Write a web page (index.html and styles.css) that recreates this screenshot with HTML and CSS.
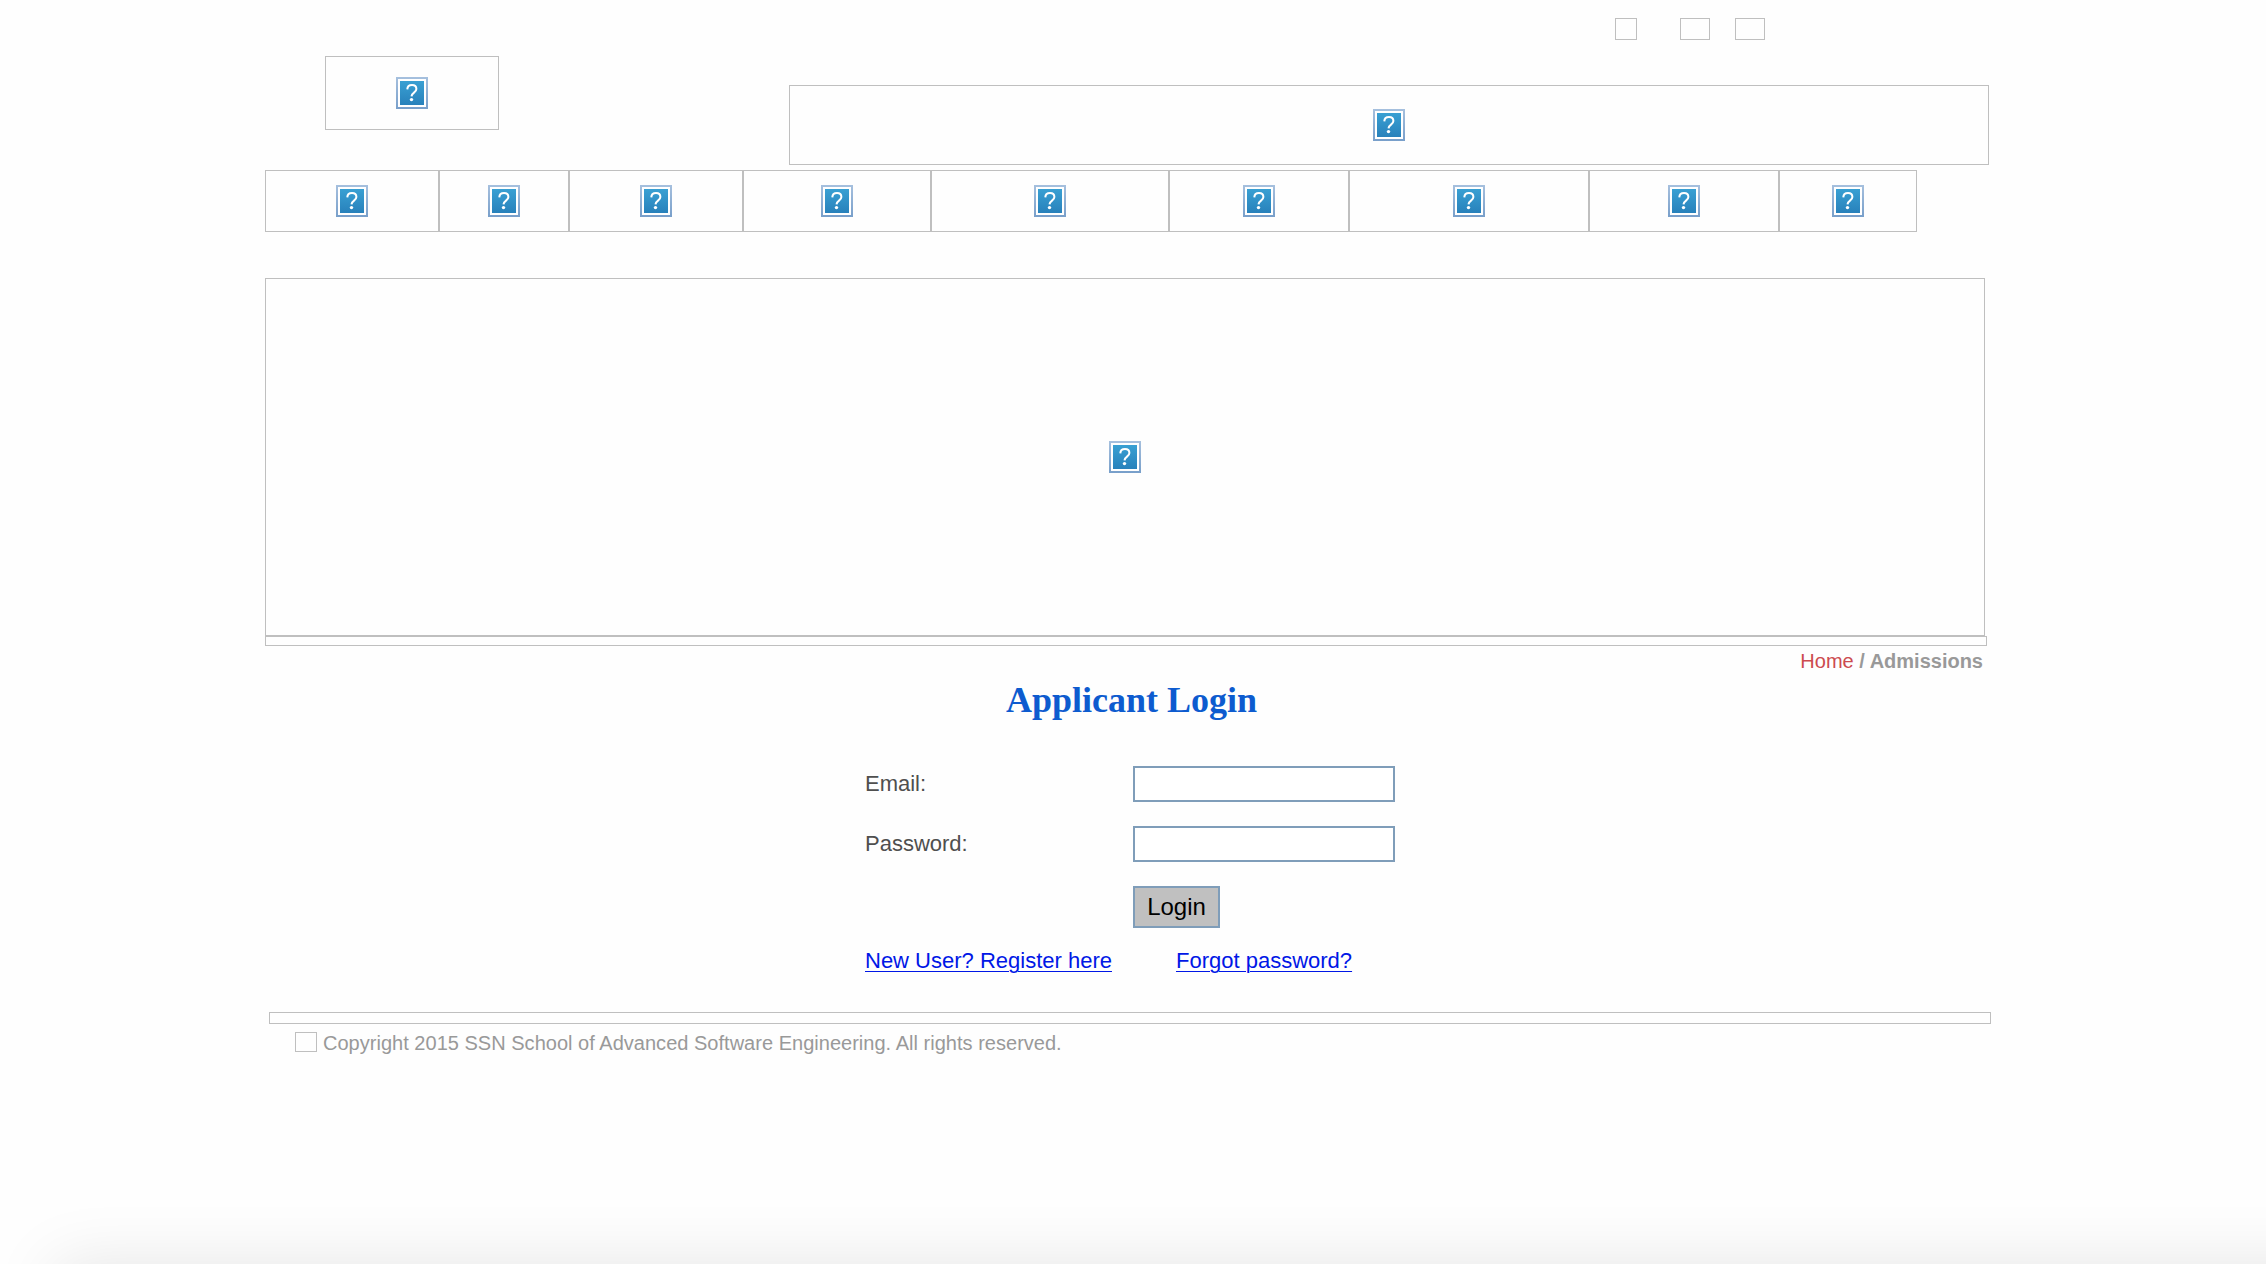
FILE: index.html
```
<!DOCTYPE html>
<html lang="en">
<head>
<meta charset="utf-8">
<title>Applicant Login</title>
<link rel="stylesheet" href="styles.css">
</head>
<body>
<svg class="defs" width="0" height="0" aria-hidden="true">
  <defs>
    <linearGradient id="frame" x1="0" y1="0" x2="0" y2="1"><stop offset="0" stop-color="#a6c0de"/><stop offset="1" stop-color="#789fca"/></linearGradient>
    <linearGradient id="fill" x1="0" y1="0" x2="0" y2="1"><stop offset="0" stop-color="#39a0d3"/><stop offset="1" stop-color="#2881bb"/></linearGradient>
    <symbol id="missing" viewBox="0 0 32 32">
      <rect width="32" height="32" fill="url(#frame)"/>
      <rect x="2" y="2" width="28" height="28" fill="#fff"/>
      <rect x="4" y="4" width="24" height="24" fill="url(#fill)"/>
      <path d="M11.3 12.4C11.4 9.6 13.2 8 16 8C18.8 8 20.4 9.7 20.4 12C20.4 15.6 15.6 15.6 15.5 19.4" fill="none" stroke="#fff" stroke-width="2"/>
      <circle cx="15.5" cy="22.6" r="1.7" fill="#fff"/>
    </symbol>
  </defs>
</svg>
<header class="header">
  <div class="box logo"><svg class="icon"><use href="#missing"/></svg></div>
  <div class="head-right">
    <div class="social">
      <span class="box small"></span>
      <span class="box wide"></span>
      <span class="box wide last"></span>
    </div>
    <div class="box banner"><svg class="icon"><use href="#missing"/></svg></div>
  </div>
</header>
<nav class="nav">
  <a class="box about"><svg class="icon"><use href="#missing"/></svg></a>
  <a class="box faculty"><svg class="icon"><use href="#missing"/></svg></a>
  <a class="box about"><svg class="icon"><use href="#missing"/></svg></a>
  <a class="box courses"><svg class="icon"><use href="#missing"/></svg></a>
  <a class="box admissions"><svg class="icon"><use href="#missing"/></svg></a>
  <a class="box campus"><svg class="icon"><use href="#missing"/></svg></a>
  <a class="box placements"><svg class="icon"><use href="#missing"/></svg></a>
  <a class="box alumni"><svg class="icon"><use href="#missing"/></svg></a>
  <a class="box contact"><svg class="icon"><use href="#missing"/></svg></a>
</nav>
<div class="box hero"><svg class="icon"><use href="#missing"/></svg></div>
<div class="box strip"></div>
<div class="crumbs"><a class="home">Home</a><b>&nbsp;/ Admissions</b></div>
<main class="login">
  <h1 class="title">Applicant Login</h1>
  <form class="form">
    <label for="email">Email:</label>
    <input class="field" id="email" type="text">
    <label for="password">Password:</label>
    <input class="field" id="password" type="password">
    <button class="submit" type="button">Login</button>
  </form>
  <div class="links"><a href="#">New User? Register here</a><a href="#">Forgot password?</a></div>
</main>
<footer class="footer">
  <div class="box footer-strip"></div>
  <div class="copyright"><span class="box mark"></span><span>Copyright 2015 SSN School of Advanced Software Engineering. All rights reserved.</span></div>
</footer>
<div class="shade"></div>
</body>
</html>
```
FILE: styles.css
```
* { box-sizing: border-box; }

body {
  margin: 0;
  height: 1264px;
  overflow: hidden;
  position: relative;
  background: #fefefe;
  font-family: "Liberation Sans", Arial, sans-serif;
  padding-left: 265px;
}

.defs { position: absolute; }

.box {
  border: 1px solid #bfbfbf;
  display: flex;
  align-items: center;
  justify-content: center;
  flex: none;
}

.icon { width: 32px; height: 32px; flex: none; }

.header { display: flex; height: 170px; padding: 18px 0 0 60px; }
.logo { width: 174px; height: 74px; margin-top: 38px; }
.head-right { margin-left: 290px; }
.social { display: flex; padding-left: 826px; height: 67px; }
.small { width: 22px; height: 22px; }
.wide { width: 30px; height: 22px; margin-left: 43px; }
.last { margin-left: 25px; }
.banner { width: 1200px; height: 80px; }

.nav { display: flex; height: 62px; margin-bottom: 46px; }
.about { width: 174px; }
.faculty { width: 130px; }
.courses { width: 188px; }
.admissions { width: 238px; }
.campus { width: 180px; }
.placements { width: 240px; }
.alumni { width: 190px; }
.contact { width: 138px; }

.hero { width: 1720px; height: 358px; }
.strip { width: 1722px; height: 10px; }

.crumbs {
  width: 1718px;
  height: 30px;
  line-height: 30px;
  text-align: right;
  font-size: 20px;
  color: #999;
}
.home { color: #cc4b4f; }

.login { padding-left: 600px; height: 336px; }
.title {
  margin: 0;
  width: 533px;
  height: 90px;
  text-align: center;
  font: bold 36px/48px "Liberation Serif", "Times New Roman", serif;
  color: #0d5bcf;
}

.form {
  display: grid;
  grid-template-columns: 268px 262px;
  grid-template-rows: 36px 36px 42px;
  row-gap: 24px;
  font-size: 22px;
  line-height: 36px;
  color: #4f4f4f;
}
.field {
  width: 262px;
  height: 36px;
  border: 2px solid #7f9db9;
  background: #fff;
  padding: 2px;
}
.submit {
  grid-column: 2;
  width: 87px;
  height: 42px;
  border: 2px solid #7f9db9;
  border-radius: 0;
  background: #c0c0c0;
  color: #000;
  font: 24px/36px "Liberation Sans", Arial, sans-serif;
  padding: 0;
}

.links { display: flex; gap: 64px; margin-top: 18px; font-size: 22px; line-height: 30px; }
.links a { color: #0017e6; text-underline-offset: 3px; text-decoration-thickness: 1px; }

.footer { padding-left: 4px; }
.footer-strip { width: 1722px; height: 12px; }
.copyright {
  display: flex;
  align-items: flex-start;
  gap: 6px;
  padding: 8px 0 0 26px;
  font-size: 20px;
  line-height: 22px;
  letter-spacing: .02px;
  color: #999;
}
.mark { width: 22px; height: 20px; }

/* soft shadow rising from the bottom edge of the window */
.shade {
  position: absolute;
  left: 0;
  right: 0;
  bottom: 0;
  height: 90px;
  overflow: hidden;
}
.shade::after {
  content: "";
  position: absolute;
  left: 55px;
  right: -100px;
  top: 90px;
  height: 200px;
  box-shadow: 0 0 62px rgba(0, 0, 0, .1);
}
```
